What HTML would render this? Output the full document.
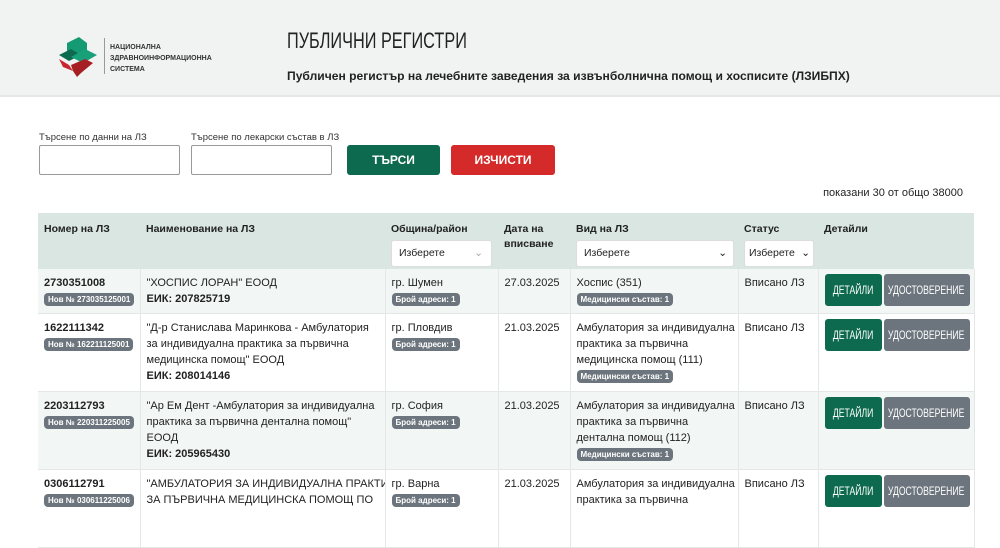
<!DOCTYPE html>
<html><head><meta charset="utf-8"><style>
*{box-sizing:border-box;margin:0;padding:0}
body{width:1000px;height:507px;overflow:hidden;background:#fff;font-family:"Liberation Sans","DejaVu Sans",sans-serif;color:#222;position:relative}
.hdr{position:absolute;left:0;top:0;width:1000px;height:97px;background:#f1f3f2;border-bottom:2px solid #e4e8e6}
.t1{position:absolute;left:287px;top:28px;font-size:22px;transform:scaleX(.74);transform-origin:left;color:#222;white-space:nowrap}
.t2{position:absolute;left:287px;top:69px;font-size:12.1px;font-weight:bold;color:#222;white-space:nowrap}
.lbl{position:absolute;font-size:9.5px;color:#333}
.inp{position:absolute;border:1px solid #999;background:#fff;border-radius:2px}
.btn{position:absolute;color:#fff;font-weight:bold;font-size:12px;text-align:center;border-radius:3px}
table{position:absolute;left:38px;top:213px;width:936px;border-collapse:collapse;font-size:11px;table-layout:fixed}
th{background:#d9e6e2;text-align:left;vertical-align:top;padding:9px 6px 0;font-size:10.5px;font-weight:bold;height:56px;line-height:15px}
td{vertical-align:top;padding:6px 6px;border-right:1px solid #e3e8e6;border-bottom:1px solid #e3e8e6;line-height:16px;white-space:nowrap;overflow:hidden}
tr.o td{background:#f2f6f4}
.b{font-weight:bold}
.bd{display:inline-block;background:#6c757d;color:#fff;font-size:8px;font-weight:bold;border-radius:4px;padding:0 4px;line-height:13px;margin-top:2px;white-space:nowrap}
.sel{background:#fff;border:1px solid #ddd;border-radius:3px;font-size:10.5px;font-weight:normal;padding:5px 7px;margin-top:3px;position:relative;height:27px;white-space:nowrap}
.bt{white-space:nowrap;margin-top:-1px}
.dt,.ud{display:inline-block;color:#fff;height:32px;line-height:32px;text-align:center;border-radius:3px;overflow:hidden;vertical-align:top}
.dt{background:#0e6a4e;width:57px}
.ud{background:#6c757d;width:86px;margin-left:2px}
.dt span,.ud span{display:inline-block;font-size:12px;transform:scaleX(.72);white-space:nowrap}
.ud span{margin-left:-20px;margin-right:-20px}
.dt span{margin-left:-10px;margin-right:-10px}
</style></head><body>
<div class="hdr">
<svg style="position:absolute;left:57px;top:37px" width="44" height="40" viewBox="0 0 44 40">
<polygon points="10,6 22,0 30,6 30,16 18,22 10,16" fill="#159b74"/>
<polygon points="2,18 14,12 24,18 12,24" fill="#0e6a4e"/>
<polygon points="14,20 28,12 40,18 26,26" fill="#17a07a"/>
<polygon points="2,22 12,28 16,34 6,30" fill="#c8262c"/>
<polygon points="14,28 28,22 36,26 24,36 20,40 16,34" fill="#a51f24"/>
</svg>
<div style="position:absolute;left:104px;top:38px;width:1px;height:36px;background:#999"></div>
<div style="position:absolute;left:110px;top:42px;font-size:7px;font-weight:bold;line-height:11px;color:#333">НАЦИОНАЛНА<br>ЗДРАВНОИНФОРМАЦИОННА<br>СИСТЕМА</div>
<div class="t1">ПУБЛИЧНИ РЕГИСТРИ</div>
<div class="t2">Публичен регистър на лечебните заведения за извънболнична помощ и хосписите (ЛЗИБПХ)</div>
</div>
<div class="lbl" style="left:39px;top:132px">Търсене по данни на ЛЗ</div>
<div class="lbl" style="left:191px;top:132px">Търсене по лекарски състав в ЛЗ</div>
<div class="inp" style="left:39px;top:145px;width:141px;height:30px"></div>
<div class="inp" style="left:191px;top:145px;width:141px;height:30px"></div>
<div class="btn" style="left:347px;top:145px;width:93px;height:30px;line-height:30px;background:#0e6a4e">ТЪРСИ</div>
<div class="btn" style="left:451px;top:145px;width:104px;height:30px;line-height:30px;background:#d42a2a">ИЗЧИСТИ</div>
<div style="position:absolute;right:37px;top:187px;font-size:11px">показани 30 от общо 38000</div>
<table>
<colgroup><col style="width:102px"><col style="width:245px"><col style="width:113px"><col style="width:72px"><col style="width:168px"><col style="width:80px"><col style="width:156px"></colgroup>
<tr><th>Номер на ЛЗ</th><th>Наименование на ЛЗ</th><th>Община/район<div class="sel" style="width:101px">Изберете <span style="position:absolute;right:8px;color:#aaa">⌄</span></div></th><th>Дата на вписване</th><th>Вид на ЛЗ<div class="sel" style="width:158px">Изберете<span style="position:absolute;right:6px">⌄</span></div></th><th>Статус<div class="sel" style="width:70px;padding:5px 4px">Изберете<span style="position:absolute;right:3px">⌄</span></div></th><th>Детайли</th></tr>
<tr class="o" style="height:44px"><td><span class="b">2730351008</span><br><span class="bd">Нов № 273035125001</span></td><td>"ХОСПИС ЛОРАН" ЕООД<br><span class="b">ЕИК: 207825719</span></td><td>гр. Шумен<br><span class="bd">Брой адреси: 1</span></td><td>27.03.2025</td><td>Хоспис (351)<br><span class="bd">Медицински състав: 1</span></td><td>Вписано ЛЗ</td><td><div class="bt"><span class="dt"><span>ДЕТАЙЛИ</span></span><span class="ud"><span>УДОСТОВЕРЕНИЕ</span></span></div></td></tr>
<tr style="height:78px"><td><span class="b">1622111342</span><br><span class="bd">Нов № 162211125001</span></td><td>"Д-р Станислава Маринкова - Амбулатория<br>за индивидуална практика за първична<br>медицинска помощ" ЕООД<br><span class="b">ЕИК: 208014146</span></td><td>гр. Пловдив<br><span class="bd">Брой адреси: 1</span></td><td>21.03.2025</td><td>Амбулатория за индивидуална<br>практика за първична<br>медицинска помощ (111)<br><span class="bd">Медицински състав: 1</span></td><td>Вписано ЛЗ</td><td><div class="bt"><span class="dt"><span>ДЕТАЙЛИ</span></span><span class="ud"><span>УДОСТОВЕРЕНИЕ</span></span></div></td></tr>
<tr class="o" style="height:78px"><td><span class="b">2203112793</span><br><span class="bd">Нов № 220311225005</span></td><td>"Ар Ем Дент -Амбулатория за индивидуална<br>практика за първична дентална помощ"<br>ЕООД<br><span class="b">ЕИК: 205965430</span></td><td>гр. София<br><span class="bd">Брой адреси: 1</span></td><td>21.03.2025</td><td>Амбулатория за индивидуална<br>практика за първична<br>дентална помощ (112)<br><span class="bd">Медицински състав: 1</span></td><td>Вписано ЛЗ</td><td><div class="bt"><span class="dt"><span>ДЕТАЙЛИ</span></span><span class="ud"><span>УДОСТОВЕРЕНИЕ</span></span></div></td></tr>
<tr style="height:78px"><td><span class="b">0306112791</span><br><span class="bd">Нов № 030611225006</span></td><td>"АМБУЛАТОРИЯ ЗА ИНДИВИДУАЛНА ПРАКТИКА<br>ЗА ПЪРВИЧНА МЕДИЦИНСКА ПОМОЩ ПО</td><td>гр. Варна<br><span class="bd">Брой адреси: 1</span></td><td>21.03.2025</td><td>Амбулатория за индивидуална<br>практика за първична</td><td>Вписано ЛЗ</td><td><div class="bt"><span class="dt"><span>ДЕТАЙЛИ</span></span><span class="ud"><span>УДОСТОВЕРЕНИЕ</span></span></div></td></tr>
</table>
</body></html>
